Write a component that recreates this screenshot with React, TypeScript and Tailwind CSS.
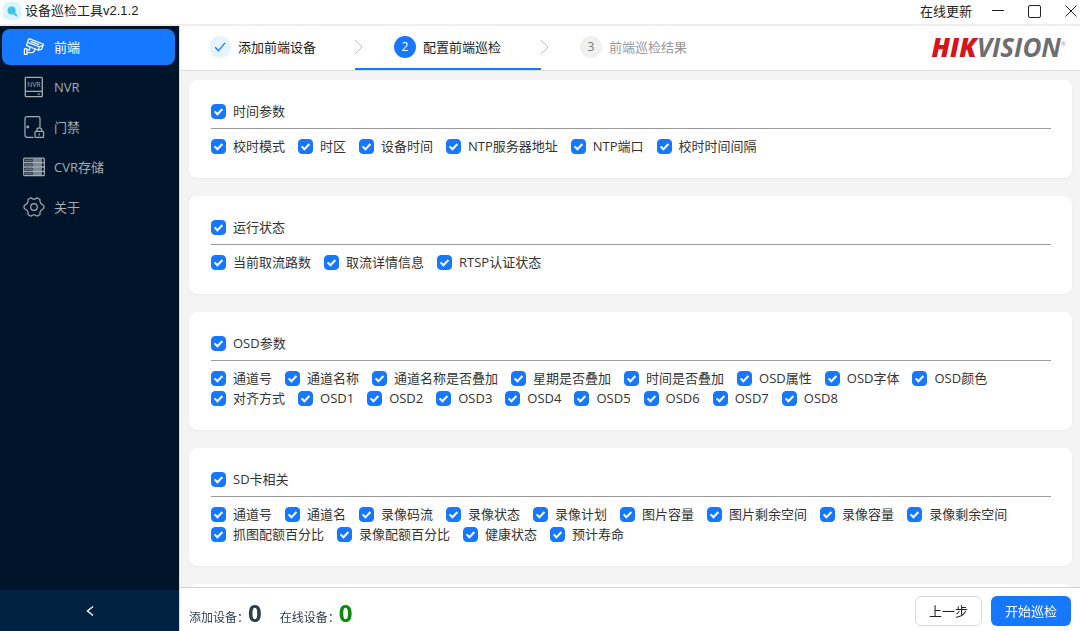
import React, { useState } from 'react';
import clsx from 'clsx';

type GroupType = { id: string; name: string; items: string[] };

const GROUPS: GroupType[] = [
  { id: 'time', name: '时间参数', items: ['校时模式', '时区', '设备时间', 'NTP服务器地址', 'NTP端口', '校时时间间隔'] },
  { id: 'status', name: '运行状态', items: ['当前取流路数', '取流详情信息', 'RTSP认证状态'] },
  {
    id: 'osd',
    name: 'OSD参数',
    items: [
      '通道号', '通道名称', '通道名称是否叠加', '星期是否叠加', '时间是否叠加', 'OSD属性', 'OSD字体', 'OSD颜色',
      '对齐方式', 'OSD1', 'OSD2', 'OSD3', 'OSD4', 'OSD5', 'OSD6', 'OSD7', 'OSD8',
    ],
  },
  {
    id: 'sd',
    name: 'SD卡相关',
    items: [
      '通道号', '通道名', '录像码流', '录像状态', '录像计划', '图片容量', '图片剩余空间', '录像容量', '录像剩余空间',
      '抓图配额百分比', '录像配额百分比', '健康状态', '预计寿命',
    ],
  },
];

const CameraIcon = () => (
  <svg width="22" height="22" viewBox="0 0 22 22" fill="none" stroke="currentColor" strokeWidth="1.2" strokeLinejoin="round">
    <path d="M5.6 3.2Q6 2.6 6.8 2.9L20.6 8.2 18.4 13.4 15.4 14.2 3.4 9.4Z" />
    <path d="M4.6 6.4 16.2 10.8 20 9.4M16.2 10.8l-.8 3.4M7.4 5.4l8.8 3.2" />
    <path d="M7.2 11.2 6.2 14.2H4M12.4 13.2l-2.2 3.2-6.2.2" />
    <path d="M1.4 12.8h2.6v5.6H1.4z" />
  </svg>
);

const NvrIcon = () => (
  <svg width="22" height="22" viewBox="0 0 22 22" fill="none" stroke="currentColor" strokeWidth="1.3">
    <rect x="2.3" y="1.3" width="17" height="19.4" rx="1" />
    <path d="M2.3 15.4h17M14.8 18.2h2" />
    <text x="10.8" y="10.6" textAnchor="middle" fontSize="7" fill="currentColor" stroke="none">NVR</text>
  </svg>
);

const DoorIcon = () => (
  <svg width="22" height="22" viewBox="0 0 22 22" fill="none" stroke="currentColor" strokeWidth="1.2">
    <path d="M10.5 21.3H4a2 2 0 0 1-2-2V2.6a2 2 0 0 1 2-2h11a2 2 0 0 1 2 2v9" />
    <circle cx="4.8" cy="11" r="0.8" fill="currentColor" />
    <rect x="12" y="15.4" width="8.6" height="6" rx="1" />
    <path d="M13.8 15.4v-1a2.5 2.5 0 0 1 5 0v1M16.3 17.4v2" />
  </svg>
);

const StorageIcon = () => (
  <svg width="22" height="22" viewBox="0 0 22 22" fill="none" stroke="currentColor" strokeWidth="1.3">
    <rect x="0.7" y="2.2" width="20.6" height="17.4" rx="1" />
    <path d="M1 6.6h20M1 11h20M1 15.4h20" />
    <path d="M9.5 4.4h9.5M9.5 8.8h9.5M9.5 13.2h9.5M9.5 17.5h9.5" strokeWidth="4" opacity="0.75" />
    <path d="M2 4.4h7M2 8.8h7M2 13.2h7M2 17.5h7" strokeWidth="2" opacity="0.6" />
  </svg>
);

const AboutIcon = () => (
  <svg width="22" height="22" viewBox="0 0 22 22" fill="none" stroke="currentColor" strokeWidth="1.2" strokeLinejoin="round">
    <path d="M7.8 1.8Q11 4.6 14.2 1.8L17 3.4Q16.2 7.6 20.6 9.2L21 11 20.6 12.8Q16.2 14.4 17 18.6L14.2 20.2Q11 17.4 7.8 20.2L5 18.6Q5.8 14.4 1.4 12.8L1 11 1.4 9.2Q5.8 7.6 5 3.4Z" />
    <circle cx="11" cy="11" r="3.3" />
  </svg>
);

const MENUS = [
  { id: 'front', name: '前端', Icon: CameraIcon },
  { id: 'nvr', name: 'NVR', Icon: NvrIcon },
  { id: 'door', name: '门禁', Icon: DoorIcon },
  { id: 'cvr', name: 'CVR存储', Icon: StorageIcon },
  { id: 'about', name: '关于', Icon: AboutIcon },
];

const STEPS = ['添加前端设备', '配置前端巡检', '前端巡检结果'];
const CURRENT_STEP = 1;

function TitleBar() {
  return (
    <header className="flex h-[26px] shrink-0 items-center justify-between border-b-2 border-[#efeded] bg-white pb-0.5 pl-[3px] text-[#222]">
      <div className="flex items-center gap-1">
        <svg width="18" height="18" viewBox="0 0 18 18">
          <rect width="18" height="18" rx="5" fill="#d9f4fa" />
          <circle cx="8.6" cy="8.4" r="4" fill="#3fc3e6" />
          <path d="m11 11 2.4 2.6" stroke="#3fc3e6" strokeWidth="2" strokeLinecap="round" />
        </svg>
        <h1 className="font-['Liberation_Sans','Noto_Sans_CJK_SC',sans-serif]">设备巡检工具v2.1.2</h1>
      </div>
      <div className="flex items-center">
        <button type="button" className="mr-5">在线更新</button>
        <button type="button" aria-label="最小化" className="mr-6">
          <svg width="12" height="12" viewBox="0 0 12 12" stroke="#222"><path d="M0 5.5h12" /></svg>
        </button>
        <button type="button" aria-label="最大化" className="mr-6">
          <svg width="13" height="13" viewBox="0 0 13 13" fill="none" stroke="#222">
            <rect x="0.5" y="0.5" width="12" height="12" rx="1.5" />
          </svg>
        </button>
        <button type="button" aria-label="关闭" className="mr-[3px]">
          <svg width="12" height="12" viewBox="0 0 12 12" stroke="#222"><path d="m.5.5 11 11M11.5.5l-11 11" /></svg>
        </button>
      </div>
    </header>
  );
}

function Sidebar() {
  const [selected, setSelected] = useState<string>('front');

  return (
    <aside className="flex w-[179px] shrink-0 flex-col bg-[#001529]">
      <nav className="flex flex-1 flex-col gap-1 py-[3px] pr-1 pl-0.5">
        {MENUS.map(({ id, name, Icon }) => (
          <button
            key={id}
            type="button"
            onClick={() => setSelected(id)}
            className={clsx(
              'flex h-9 items-center gap-[9px] rounded-lg pl-[21px]',
              selected === id ? 'bg-[#1677ff] text-white' : 'text-[#a6adb4]',
            )}
          >
            <Icon />
            {name}
          </button>
        ))}
      </nav>
      <button type="button" aria-label="收起" className="flex h-[41px] items-center justify-center bg-[#002140] text-white">
        <svg width="8" height="12" viewBox="0 0 8 12" fill="none" stroke="currentColor" strokeWidth="1.4">
          <path d="M7 1.5 1.5 6 7 10.5" />
        </svg>
      </button>
    </aside>
  );
}

function StepBar() {
  return (
    <div className="flex h-[45px] shrink-0 items-stretch justify-between border-b border-[#dcdcdc] bg-white pr-[14px]">
      <ol className="flex">
        {STEPS.map((step, index) => (
          <li
            key={step}
            className={clsx(
              'flex items-center border-b-2',
              index === 0 ? 'w-[175px] pl-[29px]' : 'w-[186px] pl-[39px]',
              index === CURRENT_STEP ? 'border-[#1677ff]' : 'border-transparent',
              index > CURRENT_STEP ? 'text-[#999]' : 'text-[#222]',
            )}
          >
            <span
              className={clsx(
                'mr-[7px] flex size-[22px] items-center justify-center rounded-full text-xs',
                index < CURRENT_STEP && 'bg-[#e6f4ff] text-[#1677ff]',
                index === CURRENT_STEP && 'bg-[#1677ff] text-white',
                index > CURRENT_STEP && 'bg-[#f0f0f0] text-[#777]',
              )}
            >
              {index < CURRENT_STEP ? (
                <svg width="12" height="12" viewBox="0 0 12 12" fill="none" stroke="currentColor" strokeWidth="1.3">
                  <path d="m1.2 6.2 3.2 3.6L11 1.8" />
                </svg>
              ) : (
                index + 1
              )}
            </span>
            {step}
            {index < STEPS.length - 1 && (
              <svg className="-mr-2 ml-auto" width="9" height="16" viewBox="0 0 9 16" fill="none" stroke="#bfbfbf">
                <path d="m1 1 7 7-7 7" />
              </svg>
            )}
          </li>
        ))}
      </ol>
      <div className="flex items-center pb-0.5 font-['Open_Sans',sans-serif] text-[26px] italic">
        <span className="font-extrabold text-[#d7141a]">HIK</span>
        <span className="font-bold text-[#6d6e71]">VISION</span>
        <sup className="text-[6px] not-italic text-[#999]">®</sup>
      </div>
    </div>
  );
}

type CheckProps = { label: string; checked: boolean; onChange: () => void };

function Check({ label, checked, onChange }: CheckProps) {
  return (
    <label className="flex h-5 cursor-pointer items-center gap-[7px] whitespace-nowrap">
      <span className="grid">
        <input
          type="checkbox"
          checked={checked}
          onChange={onChange}
          className="col-start-1 row-start-1 size-[15px] appearance-none rounded-[4px] border border-[#d9d9d9] bg-white checked:border-[#1677ff] checked:bg-[#1677ff]"
        />
        {checked && (
          <svg
            className="pointer-events-none col-start-1 row-start-1"
            width="15"
            height="15"
            viewBox="0 0 15 15"
            fill="none"
            stroke="#fff"
            strokeWidth="2"
          >
            <path d="m3.6 7.4 2.8 2.8 5-5.2" />
          </svg>
        )}
      </span>
      {label}
    </label>
  );
}

function GroupCard({ group }: { group: GroupType }) {
  const [checkedItems, setCheckedItems] = useState<string[]>(group.items);
  const isAllChecked = checkedItems.length === group.items.length;

  const handleToggleItem = (item: string) => {
    setCheckedItems((prev) => (prev.includes(item) ? prev.filter((v) => v !== item) : [...prev, item]));
  };

  return (
    <section className="shrink-0 rounded-lg bg-white pt-[21px] pr-[21px] pb-[22px] pl-[22px] shadow-xs">
      <div className="mb-[7px] border-b border-[#999] pb-[7px]">
        <Check label={group.name} checked={isAllChecked} onChange={() => setCheckedItems(isAllChecked ? [] : group.items)} />
      </div>
      <div className="flex flex-wrap gap-x-[13px]">
        {group.items.map((item) => (
          <Check key={item} label={item} checked={checkedItems.includes(item)} onChange={() => handleToggleItem(item)} />
        ))}
      </div>
    </section>
  );
}

function Footer() {
  return (
    <footer className="flex h-11 shrink-0 items-center justify-between border-t border-[#cfd3d3] bg-white pt-0.5 pr-[9px] pl-[9px]">
      <div className="flex gap-[18px] pt-1 text-[#2c3e50]">
        <p className="flex items-baseline">
          <span className="w-[59px] text-xs whitespace-nowrap">添加设备：</span>
          <strong className="text-2xl leading-7">0</strong>
        </p>
        <p className="flex items-baseline">
          <span className="w-[59px] text-xs whitespace-nowrap">在线设备：</span>
          <strong className="text-2xl leading-7 text-[#0a8a0a]">0</strong>
        </p>
      </div>
      <div className="flex gap-[9px]">
        <button type="button" className="h-[30px] rounded-md border border-[#d9d9d9] px-[13px] text-[#222]">上一步</button>
        <button type="button" className="h-[30px] rounded-md bg-[#1677ff] px-[14px] text-white">开始巡检</button>
      </div>
    </footer>
  );
}

export default function App() {
  return (
    <div className="flex h-screen flex-col bg-white font-['Open_Sans','Noto_Sans_CJK_SC',sans-serif] text-[13px] leading-5 text-[#333]">
      <TitleBar />
      <div className="flex min-h-0 flex-1">
        <Sidebar />
        <div className="flex min-w-0 flex-1 flex-col border-l border-[#ddd]">
          <StepBar />
          <main className="flex min-h-0 flex-1 flex-col gap-[18px] overflow-y-auto bg-[#f4f4f4] pt-[9px] pr-2 pl-[9px] [scrollbar-width:none]">
            {GROUPS.map((group) => (
              <GroupCard key={group.id} group={group} />
            ))}
            <section className="h-24 shrink-0 rounded-lg bg-white" />
          </main>
          <Footer />
        </div>
      </div>
    </div>
  );
}
